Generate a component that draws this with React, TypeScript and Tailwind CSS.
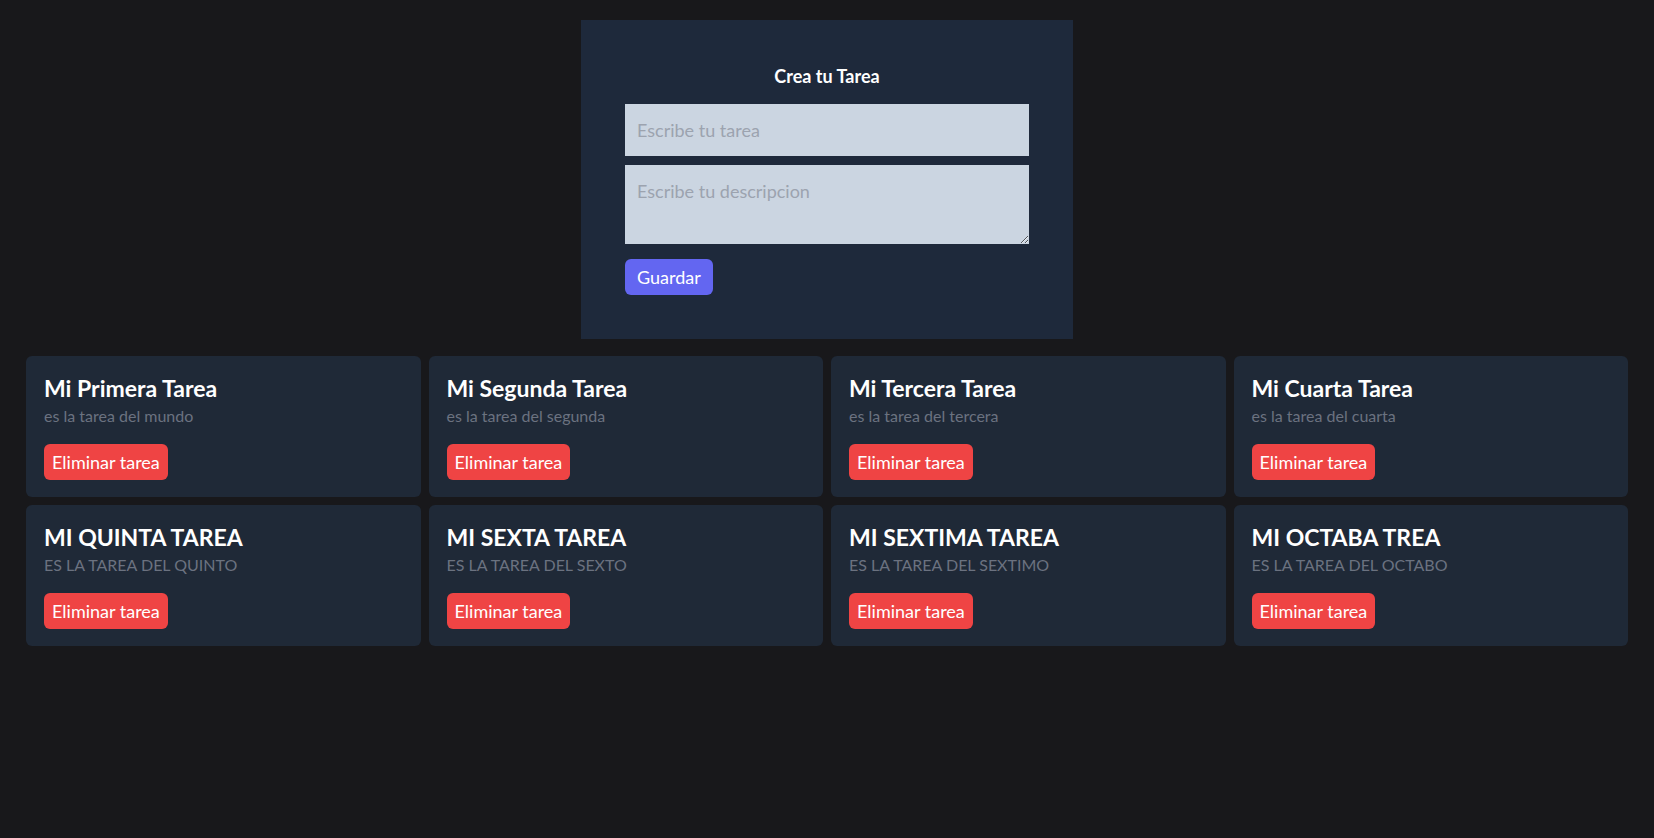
import React, { useState } from 'react';

interface Task {
  id: number;
  title: string;
  description: string;
}

const initialTasks: Task[] = [
  { id: 1, title: 'Mi Primera Tarea', description: 'es la tarea del mundo' },
  { id: 2, title: 'Mi Segunda Tarea', description: 'es la tarea del segunda' },
  { id: 3, title: 'Mi Tercera Tarea', description: 'es la tarea del tercera' },
  { id: 4, title: 'Mi Cuarta Tarea', description: 'es la tarea del cuarta' },
  { id: 5, title: 'MI QUINTA TAREA', description: 'ES LA TAREA DEL QUINTO' },
  { id: 6, title: 'MI SEXTA TAREA', description: 'ES LA TAREA DEL SEXTO' },
  { id: 7, title: 'MI SEXTIMA TAREA', description: 'ES LA TAREA DEL SEXTIMO' },
  { id: 8, title: 'MI OCTABA TREA', description: 'ES LA TAREA DEL OCTABO' },
];

function TaskForm({ onCreate }: { onCreate: (title: string, description: string) => void }) {
  const [title, setTitle] = useState('');
  const [description, setDescription] = useState('');

  const handleSubmit = (e: React.FormEvent) => {
    e.preventDefault();
    if (!title.trim()) return;
    onCreate(title, description);
    setTitle('');
    setDescription('');
  };

  return (
    <div className="mx-auto w-[492px] pt-5">
      <form onSubmit={handleSubmit} className="bg-[#1e293b] p-11">
        <h1 className="mb-4 text-center text-lg font-bold leading-6 text-white">Crea tu Tarea</h1>
        <input
          value={title}
          onChange={(e) => setTitle(e.target.value)}
          placeholder="Escribe tu tarea"
          className="mb-[9px] block h-[52px] w-full bg-[#cbd5e1] p-3 text-lg text-gray-800 placeholder:text-[#9ca3af] focus:outline-none"
        />
        <textarea
          value={description}
          onChange={(e) => setDescription(e.target.value)}
          placeholder="Escribe tu descripcion"
          className="mb-[15px] block h-[79px] w-full bg-[#cbd5e1] p-3 text-lg leading-7 text-gray-800 placeholder:text-[#9ca3af] focus:outline-none"
        />
        <button className="rounded-md bg-[#6366f1] px-3 py-1 text-lg leading-7 text-white">
          Guardar
        </button>
      </form>
    </div>
  );
}

function TaskCard({ task, onDelete }: { task: Task; onDelete: (id: number) => void }) {
  return (
    <div className="h-[141px] rounded-md bg-[#1f2937] px-[18px] py-4 text-white">
      <h2 className="text-[23px] font-bold leading-8">{task.title}</h2>
      <p className="text-base leading-6 text-[#6b7280]">{task.description}</p>
      <button
        onClick={() => onDelete(task.id)}
        className="mt-4 rounded-md bg-[#ef4444] px-2 py-1 text-lg leading-7 text-white"
      >
        Eliminar tarea
      </button>
    </div>
  );
}

export default function App() {
  const [tasks, setTasks] = useState<Task[]>(initialTasks);

  const createTask = (title: string, description: string) => {
    setTasks((prev) => [...prev, { id: Date.now(), title, description }]);
  };

  const deleteTask = (id: number) => {
    setTasks((prev) => prev.filter((t) => t.id !== id));
  };

  return (
    <main className="min-h-screen bg-[#18181b] font-['Lato',sans-serif]">
      <TaskForm onCreate={createTask} />
      <div className="mt-[17px] grid grid-cols-4 gap-2 px-[26px]">
        {tasks.map((task) => (
          <TaskCard key={task.id} task={task} onDelete={deleteTask} />
        ))}
      </div>
    </main>
  );
}
